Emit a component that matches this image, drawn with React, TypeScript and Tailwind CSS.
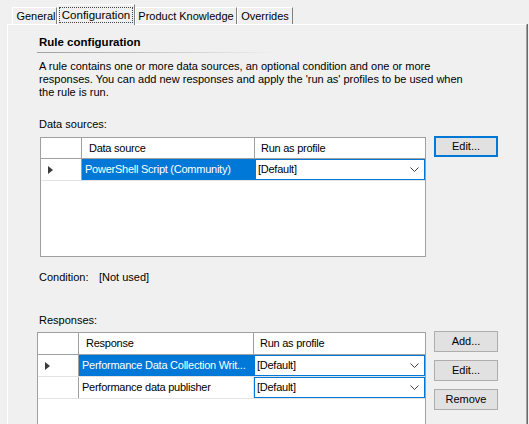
import React from "react"

const font = { fontFamily: '"Liberation Sans", Arial, sans-serif' }

function Chevron() {
  return (
    <svg width="9" height="5" viewBox="0 0 9 5" className="shrink-0">
      <path d="M0.5 0.5 L4.5 4.5 L8.5 0.5" fill="none" stroke="#3c3c3c" strokeWidth="1" />
    </svg>
  )
}

function RowArrow() {
  return (
    <svg width="5" height="8" viewBox="0 0 5 8">
      <path d="M0 0 L5 4 L0 8 Z" fill="#3a3a3a" />
    </svg>
  )
}

function Combo() {
  return (
    <div className="flex-1 h-full border border-[#0078d7] bg-white flex items-center justify-between pl-[2px] pr-[5px]">
      <span>[Default]</span>
      <Chevron />
    </div>
  )
}

function Btn({ label, focused }: { label: string; focused?: boolean }) {
  return (
    <div
      className={
        "w-[64px] h-[21px] bg-[#e1e1e1] flex items-center justify-center text-[11px] " +
        (focused ? "border-2 border-[#0078d7]" : "border border-[#adadad]")
      }
    >
      {label}
    </div>
  )
}

type Row = { name: string; selected?: boolean; current?: boolean }

function Grid({
  title,
  rows,
  width,
  col1,
  headerH,
  height,
}: {
  title: string
  rows: Row[]
  width: string
  col1: string
  headerH: string
  height: string
}) {
  return (
    <div className={"border border-[#a0a0a0] bg-white text-[11px] tracking-[-0.25px] overflow-hidden " + width + " " + height}>
      <div className={"flex border-b border-[#a0a0a0] " + headerH}>
        <div className="w-[41px] border-r border-[#a0a0a0]" />
        <div className={"border-r border-[#a0a0a0] flex items-center pl-[7px] " + col1}>{title}</div>
        <div className="flex-1 flex items-center pl-[6px]">Run as profile</div>
      </div>
      {rows.map((r) => (
        <div key={r.name} className="flex h-[22px] border-b border-[#e3e3e3]">
          <div className="w-[41px] border-r border-[#a0a0a0] flex items-center pl-[7px]">
            {r.current && <RowArrow />}
          </div>
          <div
            className={
              "flex items-center pl-[3px] whitespace-nowrap overflow-hidden " +
              col1 +
              (r.selected ? " bg-[#0078d7] text-white" : " border-r border-[#e3e3e3]")
            }
          >
            {r.name}
          </div>
          <Combo />
        </div>
      ))}
    </div>
  )
}

export default function App() {
  return (
    <div className="w-[529px] h-[424px] bg-[#f0f0f0] overflow-hidden text-black text-[11px]" style={font}>
      {/* tab strip */}
      <div className="flex items-end h-[24px] pl-[12px]">
        <div className="w-[45px] h-[17px] border-t border-l border-white border-r border-r-[#808080] flex items-center justify-center pl-[3px]">
          General
        </div>
        <div className="relative z-10 -mb-px w-[78px] h-[21px] bg-[#f0f0f0] border-t border-l border-white border-r border-r-[#808080] flex items-center justify-center">
          <span className="border border-dotted border-[#444] px-[2px] leading-[14px] text-[11.5px]">Configuration</span>
        </div>
        <div className="w-[102px] h-[17px] border-t border-l border-white border-r border-r-[#808080] flex items-center justify-center">
          Product Knowledge
        </div>
        <div className="w-[56px] h-[17px] border-t border-l border-white border-r border-r-[#808080] flex items-center justify-center">
          Overrides
        </div>
      </div>

      {/* panel */}
      <div className="ml-[7px] w-[520px] h-[410px] border-t border-l border-white border-r border-r-[#a0a0a0] shadow-[1px_0_0_#696969] pl-[31px] pt-[11px]">
        <div className="font-bold leading-[13px] text-[11.5px]">Rule configuration</div>
        <div className="mt-[3px] -ml-[2px] w-[240px] h-px bg-gradient-to-r from-[#a0a0a0] via-[#c8c8c8] to-transparent" />
        <p className="mt-[7px] leading-[13px] whitespace-nowrap">
          A rule contains one or more data sources, an optional condition and one or more
          <br />
          responses. You can add new responses and apply the 'run as' profiles to be used when
          <br />
          the rule is run.
        </p>

        <div className="mt-[19px] leading-[13px]">Data sources:</div>
        <div className="mt-[6px] ml-px flex items-start">
          <Grid
            title="Data source"
            width="w-[386px]"
            col1="w-[173px]"
            headerH="h-[21px]"
            height="h-[120px]"
            rows={[{ name: "PowerShell Script (Community)", selected: true, current: true }]}
          />
          <div className="ml-[8px] -mt-px">
            <Btn label="Edit..." focused />
          </div>
        </div>

        <div className="mt-[14px] leading-[13px] flex">
          <span className="w-[60px]">Condition:</span>
          <span>[Not used]</span>
        </div>

        <div className="mt-[30px] leading-[13px]">Responses:</div>
        <div className="mt-[5px] -ml-[2px] flex items-start">
          <Grid
            title="Response"
            width="w-[389px]"
            col1="w-[175px]"
            headerH="h-[22px]"
            height="h-[100px]"
            rows={[
              { name: "Performance Data Collection Writ...", selected: true, current: true },
              { name: "Performance data publisher" },
            ]}
          />
          <div className="ml-[8px] -mt-px flex flex-col gap-[8px]">
            <Btn label="Add..." />
            <Btn label="Edit..." />
            <Btn label="Remove" />
          </div>
        </div>
      </div>
    </div>
  )
}
